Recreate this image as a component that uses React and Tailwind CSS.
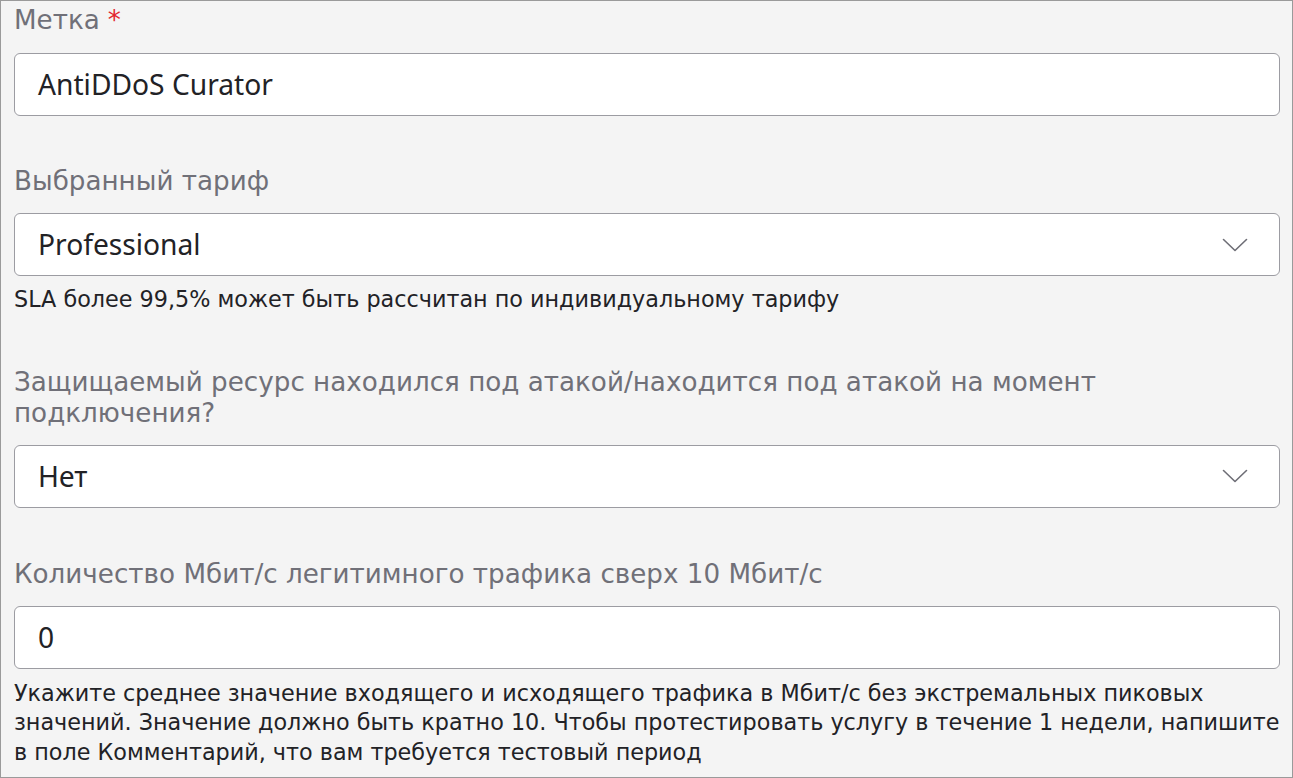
import React from 'react';

function Chevron() {
  return (
    <svg width="26" height="14" viewBox="0 0 26 14" fill="none" className="shrink-0">
      <path d="M1.5 1.5 L13 12.5 L24.5 1.5" stroke="#6e6e76" strokeWidth="1.6" strokeLinecap="round" strokeLinejoin="round" />
    </svg>
  );
}

function Label({ text, required, className = '' }) {
  return (
    <div className={`text-[26.2px] leading-[31px] text-[#707078] ${className}`}>
      {text}
      {required && <span className="ml-[8px] text-[#e3262f]">*</span>}
    </div>
  );
}

function Field({ value, select, className = '' }) {
  return (
    <div className={`h-[63px] flex items-center justify-between bg-white border border-[#9c9ca2] rounded-[6px] pl-[23px] pr-[31px] font-['Noto_Sans',sans-serif] text-[28.2px] text-[#222226] ${className}`}>
      <span>{value}</span>
      {select && <Chevron />}
    </div>
  );
}

function Help({ text, className = '' }) {
  return (
    <div className={`text-[22.3px] leading-[29.5px] text-[#222226] ${className}`}>
      {text}
    </div>
  );
}

export default function App() {
  return (
    <div className="w-full h-[778px] overflow-hidden bg-[#f4f4f4] border border-[#9a9a9a] pl-[13px] pr-[12px] font-['DejaVu_Sans',sans-serif]">
      <Label text="Метка" required className="mt-[4px]" />
      <Field value="AntiDDoS Curator" className="mt-[17px]" />

      <Label text="Выбранный тариф" className="mt-[50px]" />
      <Field value="Professional" select className="mt-[16px]" />
      <Help text="SLA более 99,5% может быть рассчитан по индивидуальному тарифу" className="mt-[9px]" />

      <Label text="Защищаемый ресурс находился под атакой/находится под атакой на момент подключения?" className="mt-[52px]" />
      <Field value="Нет" select className="mt-[16px]" />

      <Label text="Количество Мбит/с легитимного трафика сверх 10 Мбит/с" className="mt-[51px]" />
      <Field value="0" className="mt-[16px]" />
      <Help
        text="Укажите среднее значение входящего и исходящего трафика в Мбит/с без экстремальных пиковых значений. Значение должно быть кратно 10. Чтобы протестировать услугу в течение 1 недели, напишите в поле Комментарий, что вам требуется тестовый период"
        className="mt-[10px] -mr-[6px]"
      />
    </div>
  );
}
